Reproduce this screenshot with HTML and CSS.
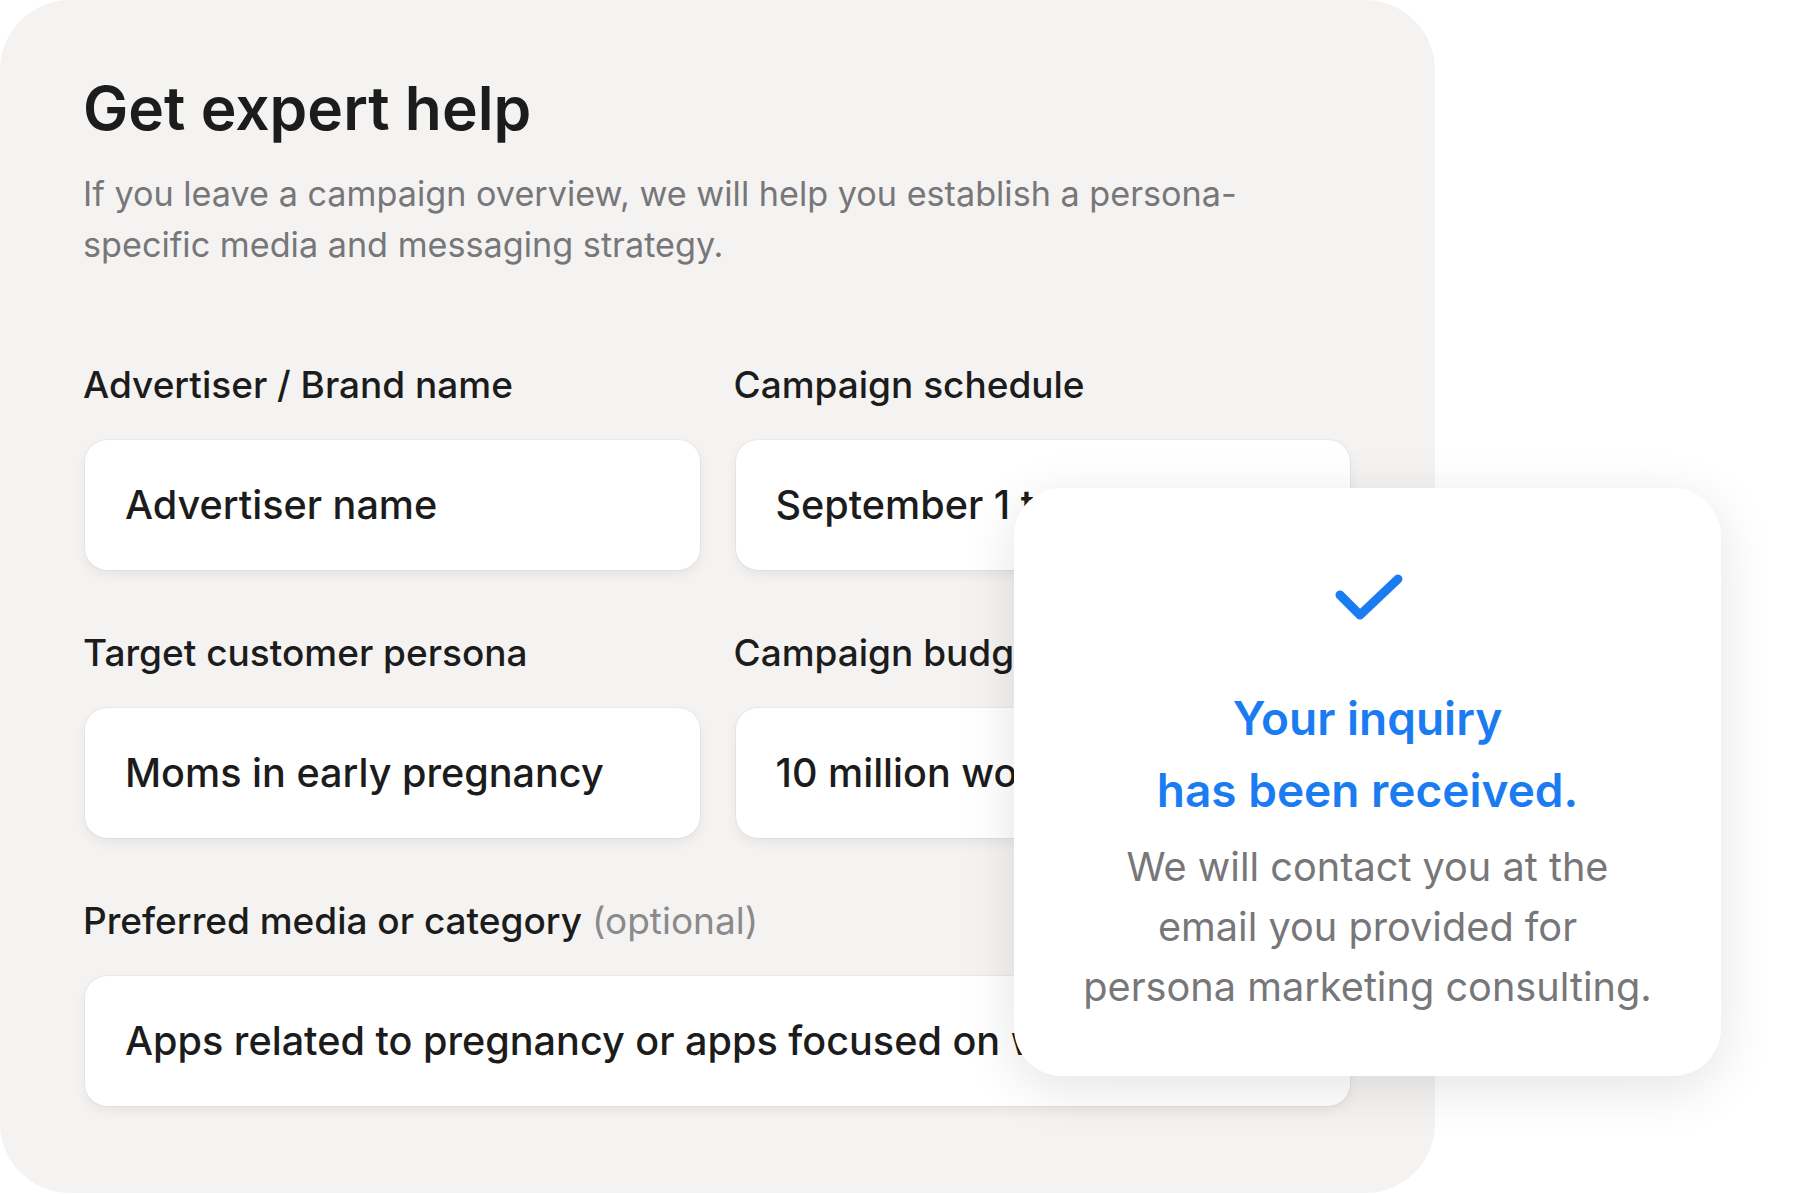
FILE: index.html
```html
<!DOCTYPE html>
<html lang="en">
<head>
  <meta charset="UTF-8">
  <title>Get expert help</title>
  <link rel="stylesheet" href="styles.css">
</head>
<body>
  <div class="stage">
    <!-- form panel -->
    <section class="panel">
      <h1 class="panel-title">Get expert help</h1>
      <p class="panel-desc">If you leave a campaign overview, we will help you establish a persona-specific media and messaging strategy.</p>

      <div class="form">
        <div class="field">
          <label class="field-label">Advertiser / Brand name</label>
          <div class="field-box">Advertiser name</div>
        </div>
        <div class="field">
          <label class="field-label">Campaign schedule</label>
          <div class="field-box">September 1 to October 31</div>
        </div>
        <div class="field">
          <label class="field-label">Target customer persona</label>
          <div class="field-box">Moms in early pregnancy</div>
        </div>
        <div class="field">
          <label class="field-label">Campaign budget</label>
          <div class="field-box">10 million won</div>
        </div>
        <div class="field wide">
          <label class="field-label">Preferred media or category <span class="optional">(optional)</span></label>
          <div class="field-box">Apps related to pregnancy or apps focused on women's health</div>
        </div>
      </div>
    </section>

    <!-- confirmation card over the form -->
    <div class="toast">
      <svg class="toast-check" width="72" height="50" viewBox="0 0 72 50">
        <path d="M8 22 L28 42 L66 6" fill="none" stroke="#1b7cf2" stroke-width="9" stroke-linecap="round" stroke-linejoin="round"/>
      </svg>
      <h2 class="toast-title">Your inquiry<br>has been received.</h2>
      <p class="toast-text">We will contact you at the<br>email you provided for<br>persona marketing consulting.</p>
    </div>
  </div>
</body>
</html>
```

FILE: styles.css
```css
body{margin:0;background:#fff;font-family:Inter,"Noto Sans",sans-serif;}
h1,h2,p{margin:0;}

.stage{
  position: relative;
  width: 1800px;
  height: 1194px;
  overflow: hidden;
}

/* panel */
.panel{
  box-sizing: border-box;
  width: 1435px;
  height: 1193px;
  padding: 72px 85px 85px;
  background-color: #f4f3f1;
  border-radius: 70px;
}
.panel-title{
  margin-left: -2px;
  font-size: 60.5px;
  line-height: 72px;
  font-weight: 600;
  color: #1c1c1c;
}
.panel-desc{
  margin-top: 24px;
  margin-left: -2px;
  width: 1190px;
  font-size: 34.2px;
  line-height: 51px;
  font-weight: 400;
  color: #77777a;
}

/* form grid */
.form{
  display: grid;
  grid-template-columns: 1fr 1fr;
  column-gap: 36px;
  row-gap: 61px;
  margin-top: 93px;
}
.field.wide{
  grid-column: 1 / 3;
}
.field-label{
  display: block;
  margin-left: -2px;
  font-size: 37px;
  line-height: 44px;
  font-weight: 500;
  color: #1c1c1c;
}
.optional{
  font-weight: 400;
  color: #8a8a8d;
}
.field-box{
  display: flex;
  align-items: center;
  box-sizing: border-box;
  height: 130px;
  margin-top: 33px;
  padding: 0 40px;
  background-color: #fff;
  border-radius: 22px;
  box-shadow: 0 0 0 1px rgba(0,0,0,.035), 0 5px 12px rgba(0,0,0,.06);
  font-size: 39.6px;
  font-weight: 500;
  color: #1c1c1c;
  white-space: nowrap;
  overflow: hidden;
}

/* confirmation card */
.toast{
  position: absolute;
  left: 1014px;
  top: 488px;
  box-sizing: border-box;
  width: 707px;
  height: 588px;
  padding-top: 85px;
  background-color: #fff;
  border-radius: 48px;
  box-shadow: 0 12px 55px rgba(0,0,0,.11);
  text-align: center;
}
.toast-check{
  display: block;
  margin: 0 auto;
}
.toast-title{
  margin-top: 59px;
  font-size: 46px;
  line-height: 72px;
  font-weight: 600;
  color: #1b7cf2;
}
.toast-text{
  margin-top: 11px;
  font-size: 39.7px;
  line-height: 60px;
  font-weight: 400;
  color: #77777a;
}
```
